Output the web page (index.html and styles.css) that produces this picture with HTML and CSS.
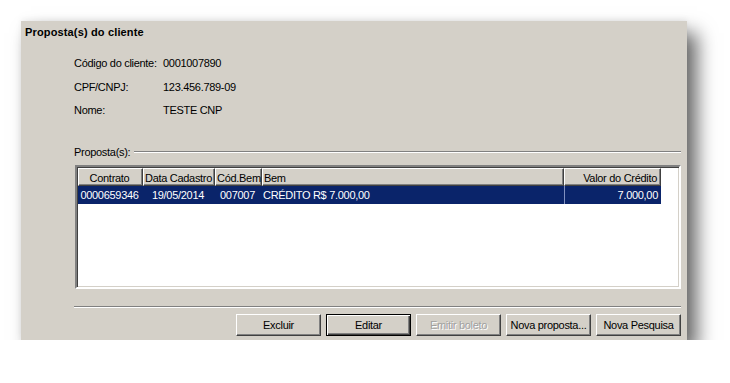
FILE: index.html
```html
<!DOCTYPE html>
<html>
<head>
<meta charset="utf-8">
<link rel="stylesheet" href="styles.css">
</head>
<body>
<div class="panel">
  <div class="title">Proposta(s) do cliente</div>
  <div class="info">
    <div class="lbl">Código do cliente:</div><div class="val">0001007890</div>
    <div class="lbl">CPF/CNPJ:</div><div class="val">123.456.789-09</div>
    <div class="lbl">Nome:</div><div class="val">TESTE CNP</div>
  </div>
  <div class="group"><span>Proposta(s):</span><div class="gline"></div></div>
  <div class="list">
    <div class="grid">
      <div class="hd c">Contrato</div>
      <div class="hd c">Data Cadastro</div>
      <div class="hd c">Cód.Bem</div>
      <div class="hd l">Bem</div>
      <div class="hd r">Valor do Crédito</div>
      <div class="sel c">0000659346</div>
      <div class="sel c">19/05/2014</div>
      <div class="sel c">007007</div>
      <div class="sel l">CRÉDITO R$ 7.000,00</div>
      <div class="sel r div">7.000,00</div>
    </div>
  </div>
  <div class="sep"></div>
  <div class="buttons">
    <button class="btn">Excluir</button>
    <button class="btn focus">Editar</button>
    <button class="btn disabled">Emitir boleto</button>
    <button class="btn">Nova proposta...</button>
    <button class="btn">Nova Pesquisa</button>
  </div>
</div>
</body>
</html>
```
FILE: styles.css
```css
html, body {
  margin: 0;
  padding: 0;
  background: #ffffff;
}
body {
  padding: 21px 0 0 21px;
  font-family: "Liberation Sans", Arial, sans-serif;
  font-size: 11px;
  letter-spacing: -0.3px;
  color: #000;
}
.panel {
  width: 666px;
  height: 319px;
  background: #d4d0c8;
  box-shadow: 10px 12px 18px rgba(0, 0, 0, 0.6), 0 -2px 6px rgba(0, 0, 0, 0.06);
  display: flex;
  flex-direction: column;
  box-sizing: border-box;
  padding: 0 6px 0 0;
}
.title {
  font-weight: bold;
  font-size: 11px;
  letter-spacing: 0.15px;
  line-height: 13px;
  padding: 5px 0 0 4px;
}
.info {
  display: grid;
  grid-template-columns: 89px auto;
  grid-auto-rows: 23.5px;
  margin: 17px 0 0 53px;
  line-height: 13px;
}
.lbl, .val {
  padding-top: 1px;
}
.group {
  display: flex;
  align-items: center;
  margin: 19px 0 0 53px;
  line-height: 13px;
}
.group span {
  margin-right: 4px;
}
.gline {
  flex: 1;
  height: 0;
  border-top: 1px solid #808080;
  border-bottom: 1px solid #ffffff;
}
.list {
  margin: 6px 0 0 54px;
  height: 124px;
  background: #fff;
  border-style: solid;
  border-width: 2px;
  border-color: #808080 #ffffff #ffffff #808080;
  box-shadow: inset 1px 1px 0 #404040, inset -1px -1px 0 #d4d0c8;
  box-sizing: border-box;
  padding: 1px 0 0 1px;
}
.grid {
  display: grid;
  grid-template-columns: 65px 72px 47px 302px 97px;
  grid-template-rows: 18px 18px;
}
.grid > div {
  white-space: nowrap;
  overflow: hidden;
  box-sizing: border-box;
  line-height: 16px;
  padding: 1px 3px 0 1px;
}
.hd {
  background: #d4d0c8;
  border-style: solid;
  border-width: 1px;
  border-color: #ffffff #404040 #404040 #ffffff;
  box-shadow: inset -1px -1px 0 #808080;
}
.sel {
  background: #0a246a;
  color: #fff;
}
.sel.div {
  border-left: 1px solid #8090c0;
}
.c { text-align: center; }
.l { text-align: left; }
.r { text-align: right; }
.sep {
  margin: 17px 0 0 53px;
  border-top: 1px solid #808080;
  border-bottom: 1px solid #ffffff;
}
.buttons {
  display: flex;
  justify-content: flex-end;
  gap: 5px;
  margin-top: 6px;
}
.btn {
  width: 85px;
  height: 22px;
  margin: 0;
  padding: 0;
  font-family: "Liberation Sans", Arial, sans-serif;
  font-size: 11px;
  letter-spacing: -0.3px;
  color: #000;
  background: #d4d0c8;
  border-style: solid;
  border-width: 1px;
  border-color: #ffffff #404040 #404040 #ffffff;
  box-shadow: inset -1px -1px 0 #808080, inset 1px 1px 0 #d4d0c8;
}
.btn.focus {
  border: 1px solid #000;
  box-shadow: inset 1px 1px 0 #ffffff, inset -1px -1px 0 #404040, inset -2px -2px 0 #808080;
}
.btn.disabled {
  color: #a0a0a0;
  text-shadow: 1px 1px 0 #ffffff;
}
```
